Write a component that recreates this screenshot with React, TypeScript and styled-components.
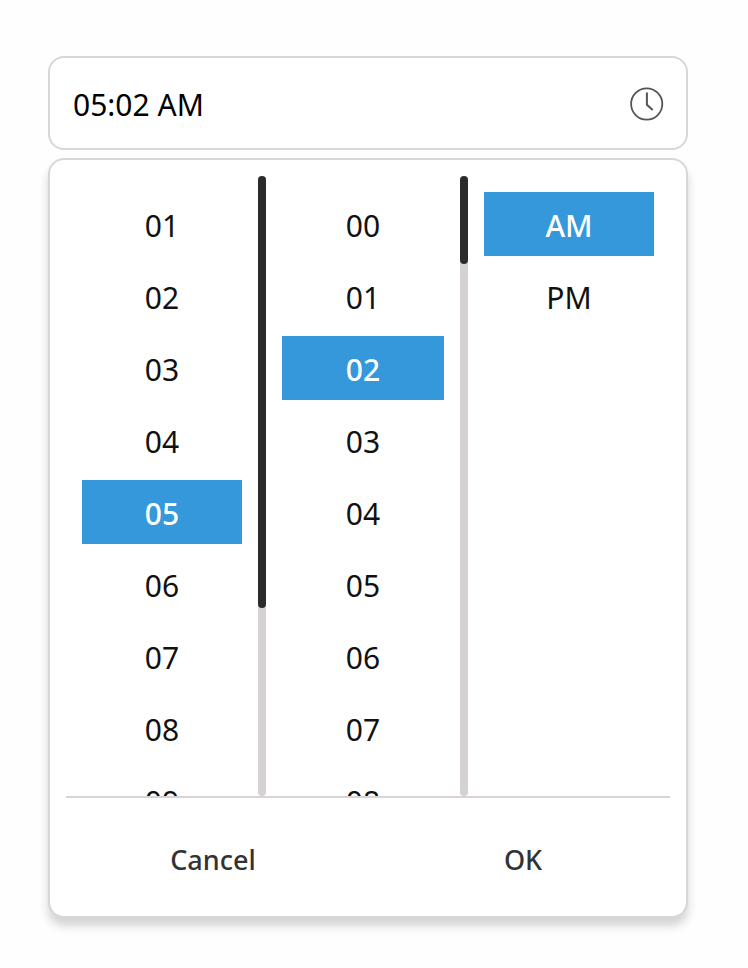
import React, { useState } from "react";
import styled, { createGlobalStyle } from "styled-components";

const GlobalStyle = createGlobalStyle`
  *, *::before, *::after { box-sizing: border-box; }
  body {
    margin: 0;
    background: #fefefe;
    color: #111;
    font-family: "Noto Sans", "Open Sans", sans-serif;
  }
  button, input { font: inherit; color: inherit; }
`;

const Page = styled.main`
  display: flex;
  flex-direction: column;
  gap: 8px;
  padding: 56px 60px 50px 48px;
`;

const Field = styled.div`
  display: flex;
  align-items: center;
  height: 94px;
  padding: 4px 22px 0 23px;
  border: 2px solid #dad5d6;
  border-radius: 16px;
  background: #fff;
`;

const TimeInput = styled.input`
  flex: 1;
  min-width: 0;
  padding: 0;
  border: 0;
  outline: 0;
  background: transparent;
  font-size: 30px;
  line-height: 40px;
  color: #000;
`;

const IconButton = styled.button`
  display: flex;
  padding: 0 0 2px;
  border: 0;
  background: none;
  cursor: pointer;
`;

const Panel = styled.section`
  padding: 16px 16px 0;
  border: 2px solid #dad5d6;
  border-radius: 16px;
  background: #fff;
  box-shadow: 0 8px 10px rgba(0, 0, 0, 0.17);
`;

const Columns = styled.div`
  display: grid;
  grid-template-columns: 100fr 101fr 101fr;
  height: 622px;
  border-bottom: 2px solid #d8d4d5;
`;

const Column = styled.div`
  display: flex;
  min-width: 0;
  min-height: 0;
`;

const Options = styled.div`
  flex: 1;
  display: flex;
  flex-direction: column;
  gap: 8px;
  padding: 16px 16px 0;
  overflow-y: auto;
  scrollbar-width: none;
`;

const Option = styled.button<{ $selected: boolean }>`
  flex: none;
  height: 64px;
  padding: 4px 0 0;
  border: 0;
  background: ${(p) => (p.$selected ? "#3498db" : "transparent")};
  color: ${(p) => (p.$selected ? "#fff" : "#111")};
  font-size: 30px;
  font-weight: ${(p) => (p.$selected ? 500 : 400)};
  line-height: 40px;
  text-align: center;
  cursor: pointer;
`;

const Track = styled.div`
  flex: none;
  width: 8px;
  border-radius: 4px;
  background: #d6d1d2;
`;

const Thumb = styled.div`
  width: 8px;
  border-radius: 4px;
  background: #2b2b2b;
`;

const Footer = styled.footer`
  display: flex;
  gap: 16px;
  padding: 24px 0 18px;
`;

const Action = styled.button`
  flex: 1;
  height: 76px;
  padding: 0;
  border: 0;
  background: none;
  color: #333;
  font-size: 27px;
  font-weight: 500;
  line-height: 36px;
  cursor: pointer;
`;

const pad = (n: number) => String(n).padStart(2, "0");
const HOURS = Array.from({ length: 12 }, (_, i) => pad(i + 1));
const MINUTES = Array.from({ length: 60 }, (_, i) => pad(i));
const PERIODS = ["AM", "PM"];

const VIEW_HEIGHT = 620;
const ROW_HEIGHT = 72;
const LIST_PADDING = 24;

function ClockIcon() {
  return (
    <svg width="34" height="34" viewBox="0 0 34 34" fill="none" stroke="#555" strokeWidth="1.8" aria-hidden="true">
      <circle cx="16.7" cy="17" r="15.6" />
      <path d="M16.9 5.5v12.2l5.8 5.3" strokeWidth="2" />
    </svg>
  );
}

interface PickerColumnProps {
  label: string;
  values: string[];
  value: string;
  onSelect: (value: string) => void;
}

function PickerColumn({ label, values, value, onSelect }: PickerColumnProps) {
  const [scrollTop, setScrollTop] = useState(0);
  const total = values.length * ROW_HEIGHT + LIST_PADDING;
  return (
    <Column>
      <Options
        role="listbox"
        aria-label={label}
        onScroll={(e) => setScrollTop(e.currentTarget.scrollTop)}
      >
        {values.map((v) => (
          <Option
            key={v}
            type="button"
            role="option"
            aria-selected={v === value}
            $selected={v === value}
            onClick={() => onSelect(v)}
          >
            {v}
          </Option>
        ))}
      </Options>
      {total > VIEW_HEIGHT && (
        <Track>
          <Thumb
            style={{
              height: Math.floor((VIEW_HEIGHT * VIEW_HEIGHT) / total),
              transform: `translateY(${Math.round((scrollTop * VIEW_HEIGHT) / total)}px)`,
            }}
          />
        </Track>
      )}
    </Column>
  );
}

export default function App() {
  const [hour, setHour] = useState("05");
  const [minute, setMinute] = useState("02");
  const [period, setPeriod] = useState("AM");

  return (
    <>
      <GlobalStyle />
      <Page>
        <Field>
          <TimeInput aria-label="Time" readOnly value={`${hour}:${minute} ${period}`} />
          <IconButton type="button" aria-label="Open time picker">
            <ClockIcon />
          </IconButton>
        </Field>
        <Panel>
          <Columns>
            <PickerColumn label="Hour" values={HOURS} value={hour} onSelect={setHour} />
            <PickerColumn label="Minute" values={MINUTES} value={minute} onSelect={setMinute} />
            <PickerColumn label="Period" values={PERIODS} value={period} onSelect={setPeriod} />
          </Columns>
          <Footer>
            <Action type="button">Cancel</Action>
            <Action type="button">OK</Action>
          </Footer>
        </Panel>
      </Page>
    </>
  );
}
